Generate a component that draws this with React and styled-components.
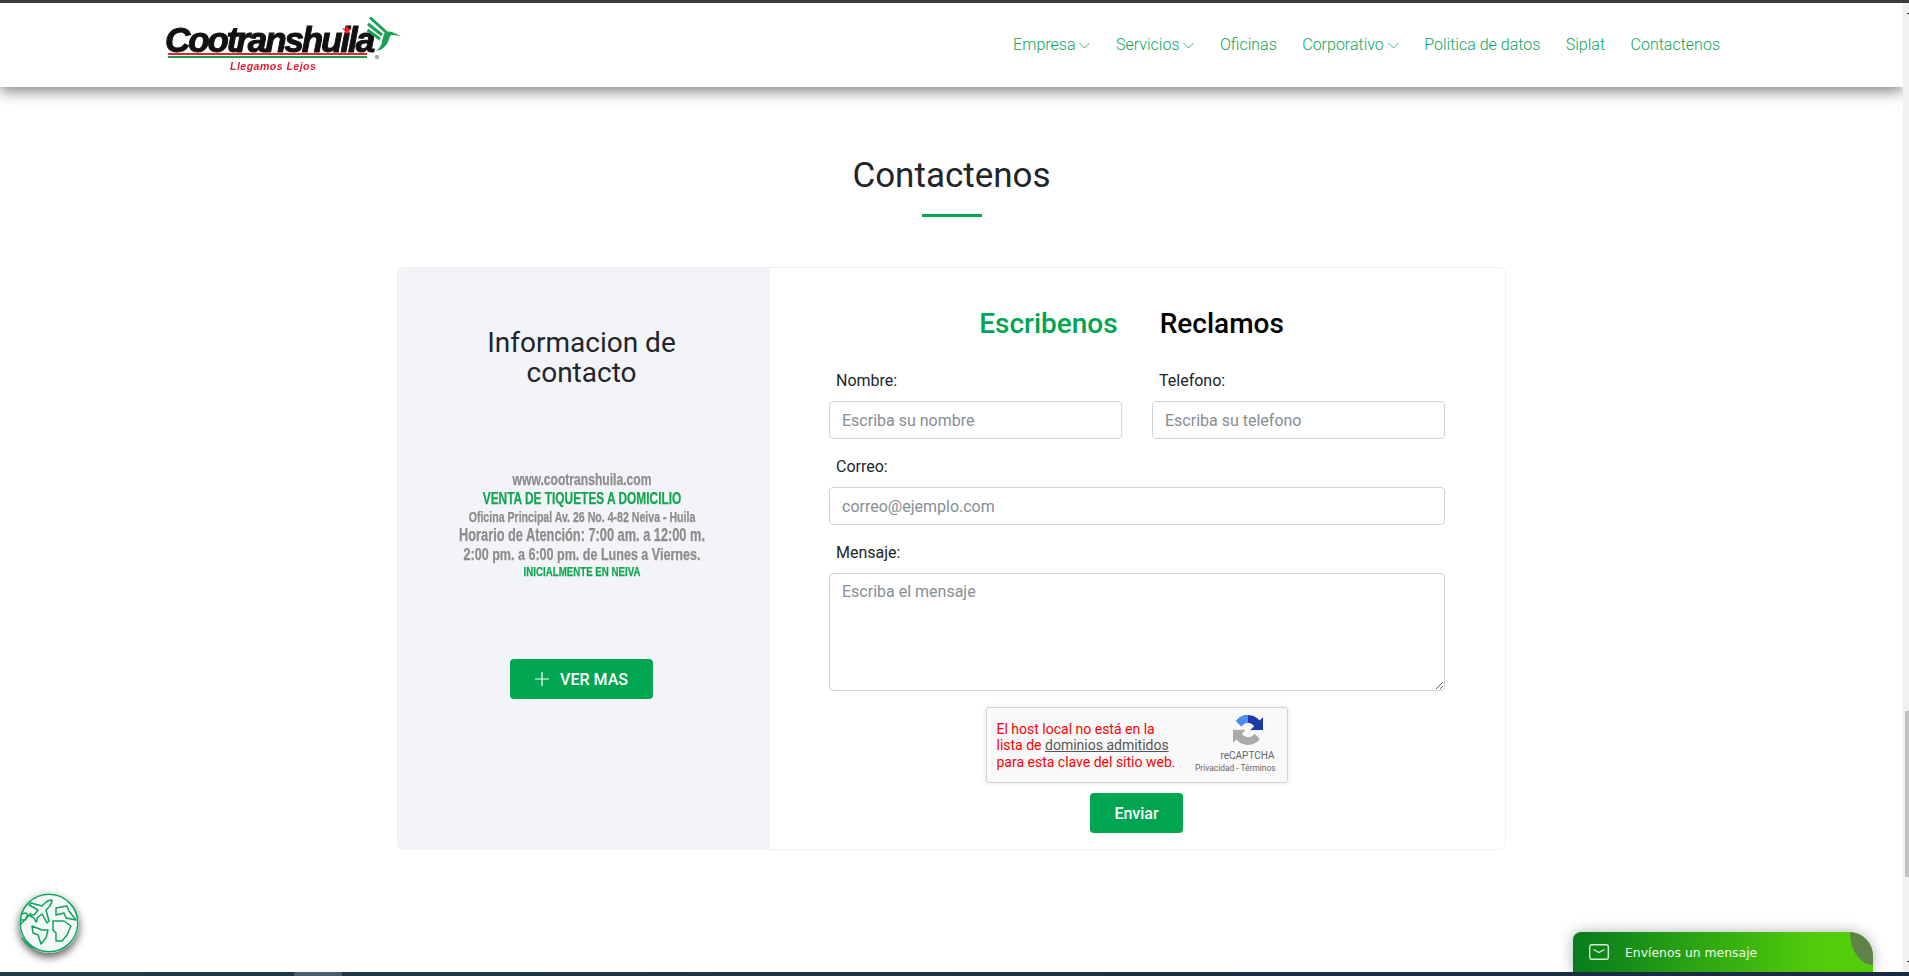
import React from 'react';
import styled, { createGlobalStyle } from 'styled-components';

const green = '#00a551';

const GlobalStyle = createGlobalStyle`
  * { box-sizing: border-box; }
  html, body { margin: 0; padding: 0; height: 100%; overflow: hidden; }
  body {
    font-family: Roboto, "Liberation Sans", sans-serif;
    font-size: 16px;
    color: #212529;
    background: #fff;
  }
`;

const Page = styled.div`
  display: flex;
  flex-direction: column;
  width: 1909px;
  height: 976px;
  overflow: hidden;
  border-top: 3px solid #3a3d40;
  position: relative;
`;

const Viewport = styled.div`
  flex: 1;
  min-height: 0;
  display: flex;
`;

const Column = styled.div`
  flex: 1;
  min-width: 0;
  display: flex;
  flex-direction: column;
`;

const Header = styled.header`
  flex: none;
  height: 84px;
  display: flex;
  align-items: center;
  justify-content: space-between;
  padding: 0 183px 0 165px;
  background: #fff;
  box-shadow: 0 4px 14px rgba(0, 0, 0, 0.5);
  position: relative;
  z-index: 2;
`;

const Logo = styled.div`
  width: 236px;
  height: 60px;
  position: relative;
  filter: blur(0.35px);
  margin-top: 3px;
`;

const LogoName = styled.div`
  position: absolute;
  left: 0;
  top: 3px;
  font-family: "Liberation Sans", sans-serif;
  font-weight: 700;
  font-style: italic;
  font-size: 35px;
  line-height: 40px;
  letter-spacing: -2.1px;
  color: #111;
  -webkit-text-stroke: 1px #111;
  white-space: nowrap;
`;

const LogoRule = styled.div`
  position: absolute;
  left: 3px;
  top: 36px;
  width: 199px;
  height: 5px;
  background: linear-gradient(#e8212e 0 36%, #fff 36% 50%, #1aa24f 50%);
`;

const LogoTag = styled.div`
  position: absolute;
  left: 65px;
  top: 43px;
  font-family: "Liberation Sans", sans-serif;
  font-weight: 700;
  font-style: italic;
  font-size: 10.5px;
  line-height: 12px;
  letter-spacing: 0.5px;
  color: #ee1c2e;
  white-space: nowrap;
`;

const LogoMark = styled.svg`
  position: absolute;
  left: 202px;
  top: -2px;
  overflow: visible;
`;

const Nav = styled.nav`
  display: flex;
  align-items: center;
  gap: 25.5px;
`;

const NavItem = styled.a`
  display: flex;
  align-items: center;
  gap: 4px;
  font-weight: 300;
  font-size: 16px;
  line-height: 24px;
  color: #0aa659;
  white-space: nowrap;
`;

const Main = styled.main`
  flex: 1;
  display: flex;
  flex-direction: column;
  align-items: center;
`;

const Title = styled.h2`
  margin: 68px 0 0;
  font-weight: 400;
  font-size: 35px;
  line-height: 42px;
  color: #212529;
`;

const TitleRule = styled.div`
  width: 60px;
  height: 3px;
  margin-top: 17px;
  background: ${green};
`;

const Card = styled.section`
  display: flex;
  width: 1109px;
  height: 583px;
  margin-top: 50px;
  background: #fff;
  border: 1px solid #eef0f3;
  border-radius: 6px;
  overflow: hidden;
`;

const InfoPanel = styled.aside`
  flex: none;
  width: 372px;
  display: flex;
  flex-direction: column;
  align-items: center;
  background: #f3f4f8;
  padding: 60px 5px 0 0;
`;

const InfoTitle = styled.h3`
  margin: 0;
  width: 240px;
  text-align: center;
  font-weight: 400;
  font-size: 28px;
  line-height: 30px;
  color: #212529;
`;

const Flyer = styled.div`
  display: flex;
  flex-direction: column;
  align-items: center;
  width: 350px;
  margin-top: 83px;
  font-family: "Liberation Sans", sans-serif;
  font-weight: 700;
  transform: scaleX(0.73);
  filter: blur(0.45px);
`;

const FlyerLine = styled.div`
  color: ${(p) => (p.$green ? '#12a550' : '#8c8c8c')};
  font-size: ${(p) => p.$size}px;
  line-height: 18.4px;
  white-space: nowrap;
  -webkit-text-stroke: 0.25px currentColor;
`;

const PlusButton = styled.button`
  display: flex;
  align-items: center;
  justify-content: center;
  gap: 11px;
  width: 143px;
  height: 40px;
  margin-top: 78px;
  border: 0;
  border-radius: 4px;
  background: ${green};
  color: #fff;
  font-family: inherit;
  font-weight: 500;
  font-size: 16px;
`;

const FormPanel = styled.div`
  flex: 1;
  padding: 0 60px 0 59px;
  display: flex;
  flex-direction: column;
`;

const Tabs = styled.div`
  display: flex;
  justify-content: center;
  gap: 42px;
  margin-top: 38px;
  padding-right: 11px;
`;

const Tab = styled.span`
  font-weight: 500;
  font-size: 28px;
  line-height: 36px;
  color: ${(p) => (p.$active ? green : '#000')};
`;

const Row = styled.div`
  display: grid;
  grid-template-columns: ${(p) => (p.$split ? '293px 293px' : '1fr')};
  column-gap: 30px;
  margin-top: ${(p) => p.$top}px;
`;

const Field = styled.div`
  display: flex;
  flex-direction: column;
`;

const Label = styled.label`
  font-size: 16px;
  line-height: 24px;
  padding-left: 7px;
  margin-bottom: 8px;
  color: #212529;
`;

const Input = styled.input`
  width: 100%;
  height: 38px;
  padding: 0 12px;
  font-family: inherit;
  font-size: 16px;
  color: #495057;
  background: #fff;
  border: 1px solid #ced4da;
  border-radius: 4px;

  &::placeholder { color: #868e96; opacity: 1; }
`;

const TextArea = styled.textarea`
  display: block;
  width: 100%;
  height: 118px;
  padding: 6px 12px;
  font-family: inherit;
  font-size: 16px;
  line-height: 24px;
  color: #495057;
  background: #fff;
  border: 1px solid #ced4da;
  border-radius: 4px;

  &::placeholder { color: #868e96; opacity: 1; }
`;

const FormFoot = styled.div`
  display: flex;
  flex-direction: column;
  align-items: center;
  margin-top: 16px;
  padding-right: 1px;
`;

const Captcha = styled.div`
  width: 302px;
  height: 76px;
  display: flex;
  justify-content: space-between;
  background: #f9f9f9;
  border: 1px solid #d3d3d3;
  border-radius: 3px;
  box-shadow: 0 0 4px 1px rgba(0, 0, 0, 0.08);
  padding: 13px 11px 0 10px;
`;

const CaptchaError = styled.div`
  font-family: Roboto, sans-serif;
  font-size: 14px;
  line-height: 16.4px;
  color: #f00;
  white-space: nowrap;

  a { color: #555; text-decoration: underline; }
`;

const CaptchaBrand = styled.div`
  display: flex;
  flex-direction: column;
  align-items: flex-end;
  margin-top: -6px;
  color: #666;

  svg { margin-right: 13px; }
`;

const CaptchaName = styled.div`
  font-size: 10px;
  line-height: 12px;
  margin-top: 5px;
  margin-right: 1px;
`;

const CaptchaLinks = styled.div`
  font-size: 8.4px;
  line-height: 12px;
  margin-top: 0;
  white-space: nowrap;
`;

const SendButton = styled.button`
  width: 93px;
  height: 40px;
  margin-top: 10px;
  border: 0;
  border-radius: 4px;
  background: ${green};
  color: #fff;
  font-family: inherit;
  font-weight: 500;
  font-size: 16px;
`;

const ScrollTrack = styled.div`
  flex: none;
  width: 6px;
  padding: 708px 0 0 2px;
  background: #f1f1f1;
  position: relative;
  z-index: 3;
`;

const ScrollThumb = styled.div`
  width: 4px;
  height: 166px;
  background: #c1c1c1;
`;

const ScrollArrow = styled.div`
  position: absolute;
  right: 0;
  top: ${(p) => p.$top}px;
  width: 2px;
  height: 1px;
  background: #333;
`;

const BottomBar = styled.div`
  flex: none;
  height: 4px;
  padding-left: 294px;
  background: linear-gradient(90deg, #213a46, #1a2a40);
  position: relative;
  z-index: 4;
`;

const BottomTab = styled.div`
  width: 48px;
  height: 4px;
  background: #4b5d68;
`;

const GlobeBadge = styled.div`
  position: absolute;
  left: 19px;
  top: 890px;
  width: 60px;
  height: 60px;
  border-radius: 50%;
  background: #f7f9f9;
  box-shadow: 0 4px 9px rgba(0, 0, 0, 0.65);
`;

const ChatTab = styled.div`
  position: absolute;
  right: 36px;
  bottom: 4px;
  width: 300px;
  height: 40px;
  display: flex;
  align-items: center;
  gap: 16px;
  padding: 0 0 0 16px;
  border-radius: 8px 24px 0 0;
  overflow: hidden;
  background: linear-gradient(90deg, #067c1d 0%, #52cd0a 82%);
  color: #eef7ea;
  font-family: "DejaVu Sans", sans-serif;
  font-size: 12.4px;
  box-shadow: 0 0 14px rgba(0, 0, 0, 0.3);
`;

const ChatLeaf = styled.div`
  position: absolute;
  top: 0;
  right: 0;
  width: 23px;
  height: 33px;
  background: #5f8248;
  border-bottom-left-radius: 100% 100%;
`;

const Chevron = () => (
  <svg width="11" height="7" viewBox="0 0 11 7" fill="none" stroke="#0aa659" strokeWidth="0.8">
    <path d="M0.5 1l5 5 5-5" />
  </svg>
);

const Bird = () => (
  <LogoMark width="34" height="37" viewBox="0 0 34 37" fill="none">
    <path d="M-20 10l1.3 3.6h3.8l-3 2.3 1.1 3.7-3.2-2.2-3.2 2.2 1.1-3.7-3-2.3h3.8z" fill="#e8212e" />
    <path d="M3 2.5L20 18M1 9l14 11M0.5 15L13 24" stroke="#18a255" strokeWidth="3" />
    <path d="M17 19c2-3 5-3 8-2l9 4-9-1c-2 0-2 2-3 4-1 5-5 9-9 11l-4 1c3-2 6-6 6-10z" fill="#18a255" />
    <circle cx="10" cy="42" r="2.2" fill="#aaa" />
  </LogoMark>
);

const Globe = () => (
  <svg width="60" height="60" viewBox="0 0 60 60" fill="none" stroke="#0aa659" strokeWidth="1.5" strokeLinejoin="round">
    <circle cx="30" cy="30" r="28.8" />
    <path d="M1 32l11-12" />
    <path d="M3 45c3 4 6 8 11 10" />
    <path d="M2 21l5-1 2 2-3 5-5 0" />
    <path d="M33 7c-2 0-5 1-7 3l-3 3-11-3-2 2 9 5-4 5-3 0-1 1 4 2 2 4 1-1 0-3 5-4 5 9 2-2-3-11 3-3c2-2 3-5 3-7z" />
    <path d="M37 15l11-2 2 5 7 9-10-2-2-5-8 2z" />
    <path d="M34 28h11l7 5-4 9-5 6h-6v-8l-3-3z" />
    <path d="M13 33l10 4h6l-2 8-5 6-3-9-5-2z" />
  </svg>
);

const Mail = () => (
  <svg width="20" height="16" viewBox="0 0 20 16" fill="none" stroke="#d6eed0" strokeWidth="1.4">
    <rect x="0.7" y="0.7" width="18.6" height="14.6" rx="2" />
    <path d="M4.5 5.5L10 8.5l5.5-3" />
  </svg>
);

const Recaptcha = () => (
  <svg width="30" height="30" viewBox="0 0 64 64">
    <path d="M64 31.955l-.033-1.37V4.687l-7.16 7.16C50.948 4.674 42.033.093 32.05.093c-10.4 0-19.622 4.96-25.458 12.64l11.736 11.86a15.55 15.55 0 0 1 4.754-5.334c2.05-1.43 4.952-2.6 8.968-2.6.485 0 .86.057 1.133.163 4.986.394 9.308 3.147 11.854 7.14l-8.307 8.308c10.522-.04 22.42-.066 27.295.005" fill="#1c3aa9" />
    <path d="M31.862.094c-.46 0-.92.01-1.37.033-9.6.48-17.93 5.32-23.9 12.606l11.736 11.86a15.55 15.55 0 0 1 4.754-5.334c2.05-1.43 4.952-2.6 8.968-2.6" fill="#4a90f5" />
    <path d="M.001 32.045l.033 1.37v25.898l7.16-7.16c5.86 7.173 14.774 11.754 24.76 11.754 10.4 0 19.622-4.96 25.458-12.64l-11.736-11.86a15.55 15.55 0 0 1-4.754 5.334c-2.05 1.43-4.952 2.6-8.968 2.6-.485 0-.86-.057-1.133-.163-4.986-.394-9.308-3.147-11.854-7.14l8.307-8.308c-10.522.04-22.42.066-27.295-.005" fill="#ababab" />
  </svg>
);

export default function App() {
  return (
    <>
      <GlobalStyle />
      <Page>
        <Viewport>
          <Column>
            <Header>
              <Logo>
                <LogoName>Cootranshuila</LogoName>
                <LogoRule />
                <LogoTag>Llegamos Lejos</LogoTag>
                <Bird />
              </Logo>
              <Nav>
                <NavItem>Empresa <Chevron /></NavItem>
                <NavItem>Servicios <Chevron /></NavItem>
                <NavItem>Oficinas</NavItem>
                <NavItem>Corporativo <Chevron /></NavItem>
                <NavItem>Politica de datos</NavItem>
                <NavItem>Siplat</NavItem>
                <NavItem>Contactenos</NavItem>
              </Nav>
            </Header>
            <Main>
              <Title>Contactenos</Title>
              <TitleRule />
              <Card>
                <InfoPanel>
                  <InfoTitle>Informacion de contacto</InfoTitle>
                  <Flyer>
                    <FlyerLine $size={16.6}>www.cootranshuila.com</FlyerLine>
                    <FlyerLine $size={16.3} $green>VENTA DE TIQUETES A DOMICILIO</FlyerLine>
                    <FlyerLine $size={14.5}>Oficina Principal Av. 26 No. 4-82 Neiva - Huila</FlyerLine>
                    <FlyerLine $size={17.5}>Horario de Atención: 7:00 am. a 12:00 m.</FlyerLine>
                    <FlyerLine $size={17.2}>2:00 pm. a 6:00 pm. de Lunes a Viernes.</FlyerLine>
                    <FlyerLine $size={13.3} $green>INICIALMENTE EN NEIVA</FlyerLine>
                  </Flyer>
                  <PlusButton>
                    <svg width="14" height="14" viewBox="0 0 14 14" stroke="#fff" strokeWidth="1.2">
                      <path d="M7 0v14M0 7h14" />
                    </svg>
                    VER MAS
                  </PlusButton>
                </InfoPanel>
                <FormPanel>
                  <Tabs>
                    <Tab $active>Escribenos</Tab>
                    <Tab>Reclamos</Tab>
                  </Tabs>
                  <Row $split $top={27}>
                    <Field>
                      <Label>Nombre:</Label>
                      <Input placeholder="Escriba su nombre" />
                    </Field>
                    <Field>
                      <Label>Telefono:</Label>
                      <Input placeholder="Escriba su telefono" />
                    </Field>
                  </Row>
                  <Row $top={16}>
                    <Field>
                      <Label>Correo:</Label>
                      <Input placeholder="correo@ejemplo.com" />
                    </Field>
                  </Row>
                  <Row $top={16}>
                    <Field>
                      <Label>Mensaje:</Label>
                      <TextArea placeholder="Escriba el mensaje" />
                    </Field>
                  </Row>
                  <FormFoot>
                    <Captcha>
                      <CaptchaError>
                        El host local no está en la<br />
                        lista de <a>dominios admitidos</a><br />
                        para esta clave del sitio web.
                      </CaptchaError>
                      <CaptchaBrand>
                        <Recaptcha />
                        <CaptchaName>reCAPTCHA</CaptchaName>
                        <CaptchaLinks>Privacidad - Términos</CaptchaLinks>
                      </CaptchaBrand>
                    </Captcha>
                    <SendButton>Enviar</SendButton>
                  </FormFoot>
                </FormPanel>
              </Card>
            </Main>
          </Column>
          <ScrollTrack>
            <ScrollThumb />
            <ScrollArrow $top={10} />
            <ScrollArrow $top={958} />
          </ScrollTrack>
        </Viewport>
        <BottomBar>
          <BottomTab />
        </BottomBar>
        <GlobeBadge><Globe /></GlobeBadge>
        <ChatTab>
          <Mail />
          <span>Envíenos un mensaje</span>
          <ChatLeaf />
        </ChatTab>
      </Page>
    </>
  );
}
